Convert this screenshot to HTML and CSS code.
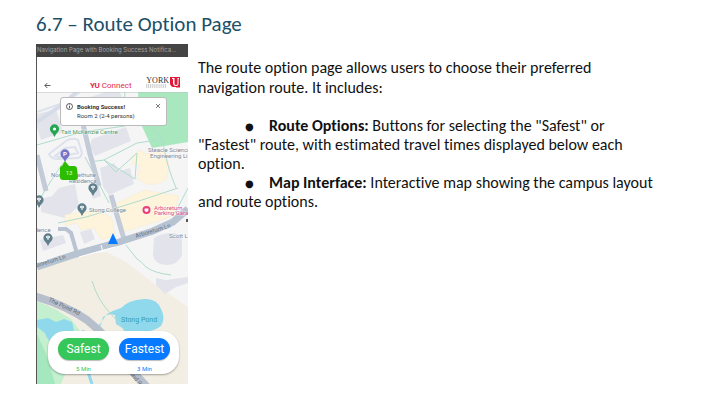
FILE: index.html
```html
<!DOCTYPE html>
<html lang="en">
<head>
<meta charset="utf-8">
<meta name="viewport" content="width=device-width, initial-scale=1">
<title>Route Option Page</title>
<link rel="stylesheet" href="styles.css">
</head>
<body>
<main class="page">
  <h1 class="title">6.7 – Route Option Page</h1>
  <div class="columns">
    <section class="phone" aria-label="Navigation page">
      <div class="frame-name">Navigation Page with Booking Success Notifica...</div>
      <header class="app-bar">
        <button class="icon-button" aria-label="Back">
          <svg width="7" height="7" viewBox="0 0 7 7"><path d="M6.5 3.5H1M3.3 1L.8 3.5 3.3 6" fill="none" stroke="#333" stroke-width=".8"/></svg>
        </button>
        <div class="brand"><b>YU</b> Connect</div>
        <div class="york">
          <div class="york-words"><span class="york-name">YORK</span><svg class="york-sub" width="20" height="4" viewBox="0 0 20 4"><path d="M0 1h20M0 3h20" stroke="#aaa" stroke-width="1.2" stroke-dasharray="1.2 .7"/></svg></div>
          <svg width="11" height="11" viewBox="0 0 11 11"><path d="M0 0h10v10H3Q0 9 0 6z" fill="#e31837"/><path d="M2 1h2.500v5.500q0 1.500 1.500 1.500t1.500-1.500V1H9v1h-.5v4.500Q8.500 9 6 9T3 6.500V2H2z" fill="#fff"/><path d="M6 9.500h4v1H6z" fill="#e31837"/></svg>
        </div>
      </header>
      <div class="map">
        <svg class="map-art" viewBox="37 92 151 292" preserveAspectRatio="xMidYMid slice" role="img" aria-label="Campus map">
          <path d="M37 92h151v292H37z" fill="#f5f5f6"/>
          <!-- parks, sand and ponds -->
          <path d="M138 92h50v50l-36 6-12-26z" fill="#a9e8bf"/>
          <path d="M37 269l43-14 26-3 20 10 30 23 32 22v77H37z" fill="#f3eee3"/>
          <path d="M156 277l32-3v32l-32-25z" fill="#f5f5f6"/>
          <path d="M37 301l18 8 16 10 12 16-10 20-12 29H37z" fill="#c4f0d0"/>
          <path d="M37 334l10 22 8 28H37z" fill="#a5e7be"/>
          <path d="M37 320l11-2 8 4 8-3 8 3 2 8-7 6-9-4-5 10q-5 0-8-9l-8-6z" fill="#90d9ed"/>
          <path d="M97 328l10-14q7-4 14-6 7-8 23-9 13-1 17 10 5 9 0 17-8 6-15 5l-5 10h-15l-2-12-8-5-1-9q-7-2-12 2L99 331z" fill="#90d9ed"/>
          <path d="M82 331l6 3M88 372q2 6 4 12" fill="none" stroke="#90d9ed" stroke-width="3"/>
          <!-- buildings -->
          <g fill="#e3e4eb">
            <path d="M37 114l19-5 7 23-22 8-4-12zM84 99l22-7h14l10 27-12 5-24-5zM92 139l34-12 5 14-36 15-5-10zM100 168l14-5 5 8 11-3 4 16-25 11-6-8zM59 188l16-4 4 22-14 12-24-6v-13l11-3zM80 232l11-3 4 10-11 5zM40 240l23-5 3 8-23 8zM88 185l10-3 3 14-8 3z"/>
            <path d="M154 238q12-7 24-4l4 6v15q-4 10-16 10-12-1-13-10z"/>
            <path d="M156 278l10 2 22-3v6l-12 4-11 7-9-9z"/>
          </g>
          <g fill="#fef4dc" stroke="#f5ead0" stroke-width=".5">
            <path d="M133 155l7-5 6 4 19-3 4 14-2 13q-8 8-21 6l-9-6 3-12-8-3z"/>
            <path d="M111 206l33-16 35 6-5 19-15 6-37 11z"/>
            <path d="M65 215l31-5 16 8 3 17-13 5-8-12-13 2-4-7-12 3z"/>
          </g>
          <!-- minor paths -->
          <g fill="none" stroke="#dce1ec" stroke-width="2">
            <path d="M49 154l17-13q6-4 12-1l4 13q-1 5-5 5l-20 1q-6 0-8-5zM55 156l10-8 10-1 3 6-19 4z"/>
            <path d="M37 112l26-9 17-11M68 125l13-3"/>
          </g>
          <g fill="none" stroke="#afdccd" stroke-width="1">
            <path d="M37 145l45-13 43-6 17-18M90 162l14-2 33-17 20-3M104 160l31 19 2-26-21 19-12-12M148 124q12 8 15 18 3 22 13 46M178 188l-36 12-32 10-24 7-28 6M109 203l-14-27-10-19M126 245l11 14q5 3 9 8 8 6 25 8M92 281q6 20 19 33t17 25M37 204q15-26 27-42M175 213l13-25M125 92l-3 32"/>
          </g>
          <!-- roads -->
          <g fill="none" stroke-linecap="butt">
            <path d="M82 120l8 34 9 32M37 155l9 36M111 195l13 44" stroke="#c3cbd8" stroke-width="5"/>
            <path d="M58 229h8l5 4 7 24" stroke="#b9c3d2" stroke-width="4"/>
            <path d="M37 267l39-13 43-12 34-11 20-9 15-13" stroke="#b8c3d2" stroke-width="7"/>
            <path d="M79 257l36-10M40 262l7-2M101 245l2 7" stroke="#fff" stroke-width="1"/>
            <path d="M34 296q31 9 53 24 25 20 40 44 9 12 20 23" stroke="#b7bfcc" stroke-width="8"/>
            <path d="M37 122l22-15 18-15" stroke="#d5dce8" stroke-width="4"/>
          </g>
          <path d="M186 219h2v3h-2z" fill="#555"/>
          <path d="M37 92h151" stroke="#b9c4c0" stroke-width="1"/>
          <!-- place labels -->
          <g class="labels">
            <text x="61" y="134" fill="#4d9b6c">Tait McKenzie Centre</text>
            <text x="148" y="152">Steacie Science</text>
            <text x="150" y="158">Engineering Li</text>
            <text x="51" y="177">Norman Bethune</text>
            <text x="69" y="183">Residence</text>
            <text x="89" y="212">Stong College</text>
            <text x="154" y="210" fill="#db4b7e">Arboretum</text>
            <text x="154" y="215" fill="#db4b7e">Parking Gara</text>
            <text x="169" y="238">Scott L</text>
            <text x="33" y="232">idence</text>
            <text class="pond-label" x="121" y="322">Stong Pond</text>
            <text class="road-label" transform="translate(136 238) rotate(-17)">Arboretum Ln</text>
            <text class="road-label" transform="translate(31 269) rotate(-17)">Arboretum Ln</text>
            <text class="road-label" transform="translate(48 301) rotate(25)">The Pond Rd</text>
            <text class="road-label" transform="translate(127 371) rotate(50)">Pond Rd</text>
          </g>
          <!-- pins -->
          <defs>
            <path id="pin" d="M0 7Q-1 4-3.2 2.2A4.6 4.6 0 1 1 3.2 2.2Q1 4 0 7z"/>
          </defs>
          <g fill="#5f7f8c">
            <use href="#pin" x="93" y="189"/><use href="#pin" x="82" y="209"/><use href="#pin" x="48" y="239"/><use href="#pin" x="39" y="201"/>
          </g>
          <g fill="none" stroke="#fff" stroke-width="1">
            <path d="M91 187l2-1 2 1-2 1zM92 189h2M80 207l2-1 2 1-2 1zM81 209h2M46 237l2-1 2 1-2 1zM47 239h2M37 199l2-1 2 1-2 1zM38 201h2"/>
          </g>
          <use href="#pin" x="54.500" y="130" fill="#26a552"/>
          <circle cx="54.500" cy="129" r="1.600" fill="#fff"/>
          <use href="#pin" x="65" y="155" fill="#7376c8"/>
          <text class="pin-letter" x="65" y="156">P</text>
          <circle cx="146.500" cy="210" r="4" fill="#ea3d7c"/>
          <path d="M144.600 208.500h3.800v2q-2 3-3.800 0z" fill="#fff"/>
          <path d="M65 161l4 5h5q3 0 3 3l1 8q0 3-3 3H63q-3 0-3-3v-9q0-2 2-2z" fill="#2dbd00"/>
          <text class="stop-number" x="69" y="175">13</text>
          <path d="M113 233l5 11h-10z" fill="#087aff"/>
        </svg>
        <div class="notice" role="status">
          <svg width="7" height="7" viewBox="0 0 7 7"><circle cx="3.500" cy="3.500" r="3" fill="none" stroke="#333" stroke-width=".8"/><path d="M3.500 1.500v.8M3.500 3v2.300" stroke="#333" stroke-width=".8"/></svg>
          <div class="notice-text"><b>Booking Success!</b><br>Room 2 (2-4 persons)</div>
          <button class="icon-button" aria-label="Dismiss">
            <svg width="6" height="6" viewBox="0 0 6 6"><path d="M1 1l4 4M5 1L1 5" stroke="#444" stroke-width=".7"/></svg>
          </button>
        </div>
        <div class="routes">
          <div class="route safest"><button class="route-button">Safest</button><span>5 Min</span></div>
          <div class="route fastest"><button class="route-button">Fastest</button><span>3 Min</span></div>
        </div>
      </div>
    </section>
    <section class="copy">
      <p>The route option page allows users to choose their preferred navigation route. It includes:</p>
      <ul>
        <li><b>Route Options:</b> Buttons for selecting the "Safest" or "Fastest" route, with estimated travel times displayed below each option.</li>
        <li><b>Map Interface:</b> Interactive map showing the campus layout and route options.</li>
      </ul>
    </section>
  </div>
</main>
</body>
</html>
```
FILE: styles.css
```css
*, *::before { box-sizing: border-box; }

body {
  margin: 0;
  background: #fff;
  color: #111;
  font-family: Carlito, Lato, sans-serif;
  font-variant-ligatures: none;
}

.page { padding: 10px 36px 19px; }

.title {
  margin: 0 0 6px;
  color: #1d5069;
  font-size: 21px;
  font-weight: 400;
  line-height: 28px;
}

.columns {
  display: grid;
  grid-template-columns: 152px minmax(0, 456px);
  gap: 10px;
  align-items: start;
}

button {
  margin: 0;
  padding: 0;
  border: 0;
  background: none;
  font: inherit;
}

svg { display: block; }

.phone {
  border-left: 1px solid #555;
  font-family: Roboto, sans-serif;
}

.frame-name {
  height: 13px;
  margin-left: -1px;
  padding-left: 1px;
  background: #444;
  color: #a5a5a5;
  font-family: Inter, sans-serif;
  font-size: 6px;
  line-height: 11px;
  white-space: nowrap;
}

.app-bar {
  display: grid;
  grid-template-columns: 40px 1fr auto;
  align-items: end;
  height: 35px;
  padding: 0 7px 2px;
}

.icon-button { display: flex; padding: 0 0 1px; }

.brand {
  color: #e5294a;
  font-size: 8px;
  line-height: 8px;
  padding-left: 6px;
}

.york { display: flex; gap: 1px; padding-bottom: 2px; }
.york-words { display: flex; flex-direction: column; }

.york-name {
  color: #333;
  font-family: "Liberation Serif", serif;
  font-size: 8px;
  line-height: 7px;
}

.map { position: relative; }
.map-art { width: 100%; height: auto; }

.labels {
  fill: #7c8797;
  font-size: 6px;
  stroke: #fff;
  stroke-width: 1px;
  stroke-opacity: .6;
  paint-order: stroke;
}

.pond-label { fill: #359bab; font-size: 7px; stroke: none; }
.road-label { fill: #626e7e; stroke: none; }
.pin-letter { fill: #fff; font-size: 6px; font-weight: 700; text-anchor: middle; }
.stop-number { fill: #d9ffc9; font-size: 6px; text-anchor: middle; }

.notice {
  position: absolute;
  top: 5px;
  right: 21px;
  left: 23px;
  display: grid;
  grid-template-columns: 7px 1fr 6px;
  gap: 4px;
  height: 29px;
  padding: 5px;
  border: 1px solid #bbb;
  border-radius: 3px;
  background: #fff;
}

.notice-text {
  margin-top: -1px;
  color: #333;
  font-size: 6px;
  line-height: 9px;
}

.notice .icon-button { align-self: start; }

.routes {
  position: absolute;
  right: 9px;
  bottom: 10px;
  left: 11px;
  display: flex;
  justify-content: space-between;
  height: 43px;
  padding: 7px 9px 0 10px;
  border-radius: 17px;
  background: #fff;
  box-shadow: 0 1px 2px #0005;
}

.route {
  display: flex;
  flex-direction: column;
  gap: 5px;
  width: 51px;
  font-size: 6px;
  line-height: 7px;
  text-align: center;
}

.route-button {
  height: 22px;
  border-radius: 11px;
  box-shadow: 0 1px 1px #0004;
  color: #fff;
  font-size: 12px;
}

.safest { color: #35c759; }
.safest .route-button { background: #35c759; }
.fastest { color: #087aff; }
.fastest .route-button { background: #087aff; }

.copy {
  padding-top: 14px;
  font-size: 16px;
  line-height: 19px;
}

.copy p { margin: 0 0 18px; line-height: 20px; }
.copy ul { margin: 0; padding: 0; list-style: none; }

.copy li::before {
  content: "●";
  display: inline-block;
  width: 71px;
  padding-left: 47px;
  font-family: "DejaVu Sans", sans-serif;
  font-size: 10px;
  line-height: 12px;
  vertical-align: middle;
}
```
